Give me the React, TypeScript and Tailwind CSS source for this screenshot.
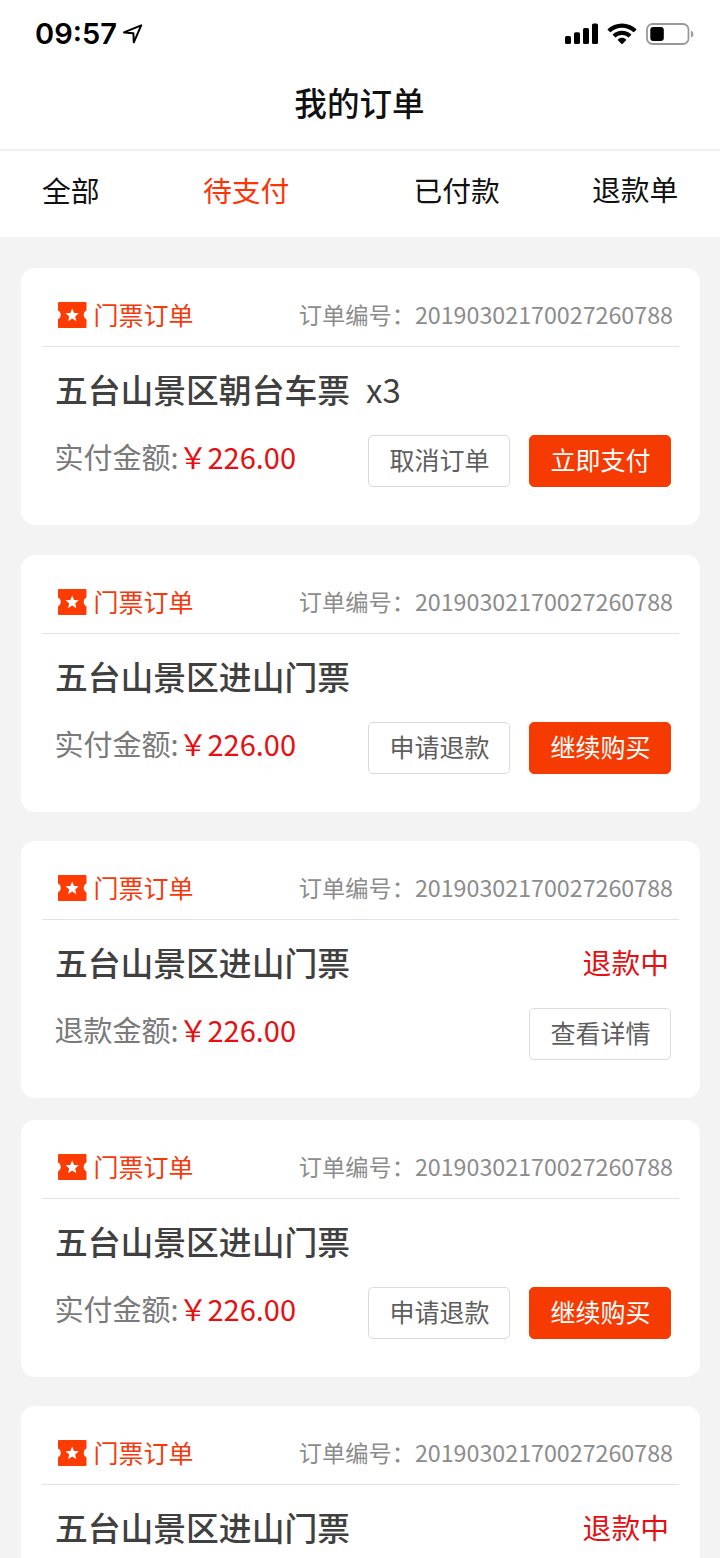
import clsx from "clsx";

interface Action {
  label: string;
  primary?: boolean;
}

interface Order {
  title: string;
  count?: string;
  status?: string;
  amountLabel?: string;
  actions?: Action[];
  gap: string;
}

const tabs = [
  { label: "全部", className: "ml-[42px] w-[161px]" },
  { label: "待支付", className: "w-[210.5px]", active: true },
  { label: "已付款", className: "w-[178.5px]" },
  { label: "退款单", className: "-mt-px" },
];

const orders: Order[] = [
  {
    title: "五台山景区朝台车票",
    count: "x3",
    amountLabel: "实付金额:",
    actions: [{ label: "取消订单" }, { label: "立即支付", primary: true }],
    gap: "mt-[30.5px]",
  },
  {
    title: "五台山景区进山门票",
    amountLabel: "实付金额:",
    actions: [{ label: "申请退款" }, { label: "继续购买", primary: true }],
    gap: "mt-[29.5px]",
  },
  {
    title: "五台山景区进山门票",
    status: "退款中",
    amountLabel: "退款金额:",
    actions: [{ label: "查看详情" }],
    gap: "mt-[28.5px]",
  },
  {
    title: "五台山景区进山门票",
    amountLabel: "实付金额:",
    actions: [{ label: "申请退款" }, { label: "继续购买", primary: true }],
    gap: "mt-[21.5px]",
  },
  {
    title: "五台山景区进山门票",
    status: "退款中",
    gap: "mt-[28.5px]",
  },
];

function StatusBar() {
  return (
    <div className="flex h-[67px] items-center justify-between pl-[35px] pr-[26px]">
      <div className="flex items-center gap-[7px]">
        <span className="w-[81px] whitespace-nowrap font-['Inter'] text-[29px] font-semibold leading-none text-black">
          09:57
        </span>
        <svg width="20" height="20" viewBox="0 0 20 20" fill="none">
          <path
            d="M18.2 1.3 L1 8.4 L10.4 9.3 L10.8 18.3 Z"
            stroke="#000"
            strokeWidth="2"
            strokeLinejoin="round"
          />
        </svg>
      </div>
      <div className="flex items-center">
        {/* Signal */}
        <svg width="33" height="22" viewBox="0 0 33 22">
          <rect x="0" y="13" width="6" height="8" rx="1.6" />
          <rect x="9" y="9.3" width="6" height="11.7" rx="1.6" />
          <rect x="18" y="5" width="6" height="16" rx="1.6" />
          <rect x="27" y="0.5" width="6" height="20.5" rx="1.6" />
        </svg>
        {/* Wifi */}
        <svg className="ml-[9px]" width="30" height="22" viewBox="0 0 30 22">
          <path d="M15 0.4 C20.6 0.4 25.6 2.6 29.2 6.1 Q29.6 6.5 29.2 6.9 L27 9.1 Q26.6 9.5 26.2 9.1 C23.2 6.3 19.3 4.7 15 4.7 C10.7 4.7 6.8 6.3 3.8 9.1 Q3.4 9.5 3 9.1 L0.8 6.9 Q0.4 6.5 0.8 6.1 C4.4 2.6 9.4 0.4 15 0.4 Z" />
          <path d="M15 7.7 C18.6 7.7 21.8 9.1 24.1 11.3 Q24.5 11.7 24.1 12.1 L21.9 14.2 Q21.5 14.6 21.1 14.2 C19.4 12.8 17.3 11.9 15 11.9 C12.7 11.9 10.6 12.8 8.9 14.2 Q8.5 14.6 8.1 14.2 L5.9 12.1 Q5.5 11.7 5.9 11.3 C8.2 9.1 11.4 7.7 15 7.7 Z" />
          <path d="M15 14.8 C16.6 14.8 18 15.4 19.1 16.4 Q19.5 16.8 19.1 17.2 L15.4 20.9 Q15 21.3 14.6 20.9 L10.9 17.2 Q10.5 16.8 10.9 16.4 C12 15.4 13.4 14.8 15 14.8 Z" />
        </svg>
        {/* Battery */}
        <svg className="ml-[9px]" width="48" height="24" viewBox="0 0 48 24">
          <rect x="1" y="2" width="41.5" height="20" rx="5.5" fill="none" stroke="#999" strokeWidth="1.8" />
          <rect x="4.3" y="5" width="13.5" height="14" rx="3" />
          <path d="M45 8.6 Q47.4 10 47.4 12.2 Q47.4 14.4 45 15.8 Z" fill="#999" />
        </svg>
      </div>
    </div>
  );
}

function TicketIcon() {
  return (
    <svg width="29" height="26" viewBox="0 0 29 26">
      <path
        d="M1 0 H27.5 Q28.5 0 28.5 1 V8.6 C24.8 10.2 24.8 15.8 28.5 17.4 V25 Q28.5 26 27.5 26 H1 Q0 26 0 25 V17.4 C3.7 15.8 3.7 10.2 0 8.6 V1 Q0 0 1 0 Z"
        fill="#fc3c02"
      />
      <path
        d="M14.2 6.4 L16.1 10.9 L20.8 11.3 L17.2 14.4 L18.3 19.2 L14.2 16.6 L10.1 19.2 L11.2 14.4 L7.6 11.3 L12.3 10.9 Z"
        fill="#fff"
      />
    </svg>
  );
}

function OrderCard({ order }: { order: Order }) {
  return (
    <section
      className={clsx(
        "ml-[21.4px] h-[257.5px] w-[678.6px] shrink-0 rounded-[14px] bg-white px-[21px]",
        order.gap
      )}
    >
      <div className="flex h-[79px] items-center justify-between border-b border-[#e3e3e3] pl-[15.5px] pr-[6px] pt-4">
        <div className="flex items-center gap-[6.5px]">
          <TicketIcon />
          <span className="pb-0.5 text-[25px] leading-[26px] text-[#f6390b]">门票订单</span>
        </div>
        <span className="pb-0.5 text-[23.25px] leading-[26px] text-[#8c8c8c]">
          订单编号：20190302170027260788
        </span>
      </div>
      <div className="flex h-[88px] items-center pb-[3px] pl-[12.5px] pr-[10px]">
        <h2 className="text-[32.8px] font-medium leading-none text-[#404040]">{order.title}</h2>
        {order.count && (
          <span className="ml-4 text-[33px] leading-none text-[#404040]">{order.count}</span>
        )}
        {order.status && (
          <span className="ml-auto text-[28.8px] leading-none text-[#e60f12]">{order.status}</span>
        )}
      </div>
      {order.amountLabel && (
        <div className="flex justify-between pl-[12px] pr-[7.5px]">
          <p className="mt-[6px] flex whitespace-nowrap text-[29px] leading-[30px] text-[#7a7a7a]">
            {order.amountLabel}
            <span className="text-[#e60f12]">￥226.00</span>
          </p>
          <div className="flex gap-[19px]">
            {order.actions?.map((action) => (
              <button
                key={action.label}
                className={clsx(
                  "flex h-[52px] w-[142px] items-center justify-center rounded-[5px] border pb-0.5 text-[25px] leading-none",
                  action.primary
                    ? "border-[#f53b02] bg-[#f53b02] text-white"
                    : "border-[#d9d9d9] bg-white text-[#5e5e5e]"
                )}
              >
                {action.label}
              </button>
            ))}
          </div>
        </div>
      )}
    </section>
  );
}

export default function App() {
  return (
    <div className="flex h-[1558px] w-[720px] flex-col overflow-hidden bg-[#f3f3f3] font-['Noto_Sans_CJK_SC',sans-serif]">
      <header className="h-[151px] shrink-0 border-b-2 border-[#f0f0f0] bg-white">
        <StatusBar />
        <h1 className="pr-px pt-[18px] text-center text-[32.6px] font-medium leading-[34px] text-[#111]">
          我的订单
        </h1>
      </header>
      <nav className="flex h-[86px] shrink-0 items-start bg-white pt-[24px]">
        {tabs.map((tab) => (
          <span
            key={tab.label}
            className={clsx(
              "whitespace-nowrap text-[28.8px] leading-[30px]",
              tab.className,
              tab.active ? "text-[#fc3408]" : "text-[#111]"
            )}
          >
            {tab.label}
          </span>
        ))}
      </nav>
      {orders.map((order, i) => (
        <OrderCard key={i} order={order} />
      ))}
    </div>
  );
}
